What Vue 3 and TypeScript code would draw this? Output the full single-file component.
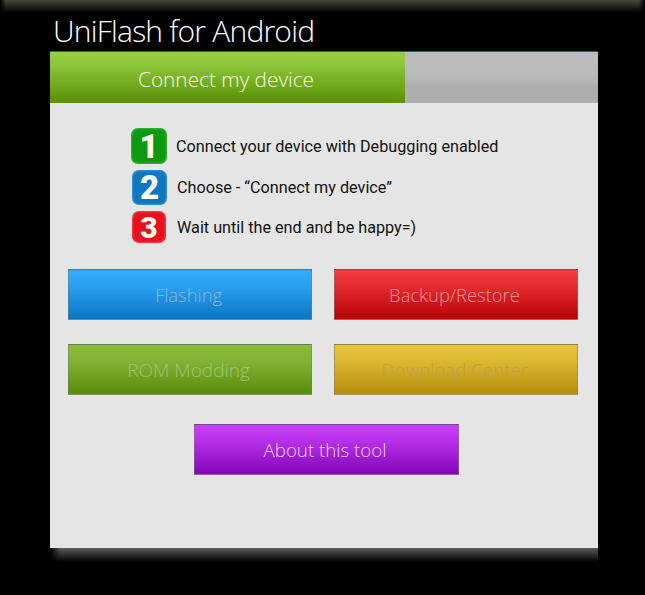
<script setup lang="ts">
interface Step { n: number; text: string; tone: string }
const steps: Step[] = [
  { n: 1, text: 'Connect your device with Debugging enabled', tone: 'green' },
  { n: 2, text: 'Choose - “Connect my device”', tone: 'blue' },
  { n: 3, text: 'Wait until the end and be happy=)', tone: 'red' },
]
</script>

<template>
  <div class="window">
    <div class="shade"></div>
    <h1 class="title">UniFlash for Android</h1>
    <div class="panel">
      <div class="tabs">
        <div class="tab-on">Connect my device</div>
        <div class="tab-off"></div>
      </div>
      <div class="body">
        <ul class="steps">
          <li v-for="s in steps" :key="s.n" class="step" :class="s.tone">
            <span class="badge">{{ s.n }}</span>
            <span>{{ s.text }}</span>
          </li>
        </ul>
        <div class="grid">
          <button class="btn flash">Flashing</button>
          <button class="btn backup">Backup/Restore</button>
          <button class="btn rom">ROM Modding</button>
          <button class="btn download">Download Center</button>
        </div>
        <button class="btn about">About this tool</button>
      </div>
    </div>
    <div class="drop"></div>
  </div>
</template>

<style>
html, body { margin: 0; background: #000; }
</style>

<style scoped>
.window {
  position: relative;
  width: 645px;
  height: 595px;
  box-sizing: border-box;
  padding: 14px 47px 0 50px;
  overflow: hidden;
  background: #000;
  font-family: "Open Sans", "Liberation Sans", sans-serif;
}
.shade {
  position: absolute;
  inset: 0 0 auto 0;
  height: 13px;
  background: linear-gradient(#4a463c, #1a1a1a 60%, #000);
  -webkit-mask-image: linear-gradient(90deg, transparent, #000 6px, #000 639px, transparent);
  mask-image: linear-gradient(90deg, transparent, #000 6px, #000 639px, transparent);
}
.title {
  position: relative;
  margin: 0 0 0 3px;
  height: 37px;
  font-size: 30px;
  line-height: 33px;
  font-weight: 300;
  letter-spacing: -0.78px;
  color: #fff;
  white-space: nowrap;
}
.panel {
  width: 548px;
  border-top: 1px solid #6a4e18;
  box-sizing: border-box;
}
.tabs { display: flex; height: 51px; }
.tab-on {
  width: 355px;
  padding: 2px 3px 0 0;
  box-sizing: border-box;
  display: flex;
  align-items: center;
  justify-content: center;
  color: #f6fbe4;
  font-size: 20.8px;
  font-weight: 300;
  background: linear-gradient(#98d040, #8cc63a 25%, #5f9409 92%, #5e9308);
}
.tab-off {
  flex: 1;
  background: linear-gradient(#bdbdbd, #bababa 45%, #aeaeae 70%, #afafaf);
}
.body {
  height: 445px;
  box-sizing: border-box;
  padding: 25px 20px 0 18px;
  background: #e5e5e5;
}
.steps {
  list-style: none;
  margin: 0 0 26px;
  padding: 0 0 0 63px;
  display: flex;
  flex-direction: column;
  gap: 6px;
  font-family: Roboto, "Liberation Sans", sans-serif;
  font-size: 16.2px;
  color: #111;
}
.step {
  display: flex;
  align-items: center;
}
.badge {
  flex: none;
  box-sizing: border-box;
  border-radius: 7px;
  display: flex;
  align-items: center;
  justify-content: center;
  font-family: Roboto, "Liberation Sans", sans-serif;
  font-size: 33px;
  font-weight: 900;
  color: #fdfdf0;
}
.step.green { height: 36px; gap: 9px; }
.step.blue { height: 35px; gap: 10px; }
.step.red { height: 32px; gap: 11px; }
.step.green .badge {
  width: 36px;
  height: 36px;
  background: #0d9a10;
  box-shadow: inset 0 0 3px #6fd060;
}
.step.blue .badge {
  width: 35px;
  height: 35px;
  margin-left: 1px;
  background: #0e77bd;
  box-shadow: inset 0 0 3px #66b8ea;
}
.step.red .badge {
  width: 34px;
  height: 32px;
  margin-left: 1px;
  font-size: 30px;
  background: #ea0f1c;
  box-shadow: inset 0 0 3px #ff8080;
}
.grid {
  display: grid;
  grid-template-columns: 244px 244px;
  column-gap: 22px;
  row-gap: 24px;
}
.btn {
  display: block;
  height: 51px;
  padding: 0 3px 0 0;
  box-sizing: border-box;
  border: 1px solid rgba(120, 120, 120, 0.55);
  font-family: "Open Sans", "Liberation Sans", sans-serif;
  font-size: 18.4px;
  font-weight: 300;
}
.flash {
  background: linear-gradient(#33acfd, #2a9fef 35%, #0a76c4);
  color: #8ab8d8;
}
.backup {
  background: linear-gradient(#f23c3f, #e42a2e 35%, #b70306);
  color: #ec9498;
}
.rom {
  font-size: 19px;
  background: linear-gradient(#8bbb3a, #82b234 35%, #5a8a08);
  color: #a2c274;
}
.download {
  font-size: 18.7px;
  background: linear-gradient(#e8c43c, #dcb630 35%, #b58e0a);
  color: #bda24e;
}
.about {
  width: 265px;
  margin: 29px 0 0 126px;
  font-size: 18.7px;
  background: linear-gradient(#c840fa, #b52ee8 35%, #8206ba);
  color: #f6d4fc;
}
.drop {
  height: 14px;
  width: 548px;
  background: linear-gradient(#5c5c5c, #2c2c2c 50%, #000);
  -webkit-mask-image: linear-gradient(90deg, transparent, #000 10px);
  mask-image: linear-gradient(90deg, transparent, #000 10px);
}
</style>
